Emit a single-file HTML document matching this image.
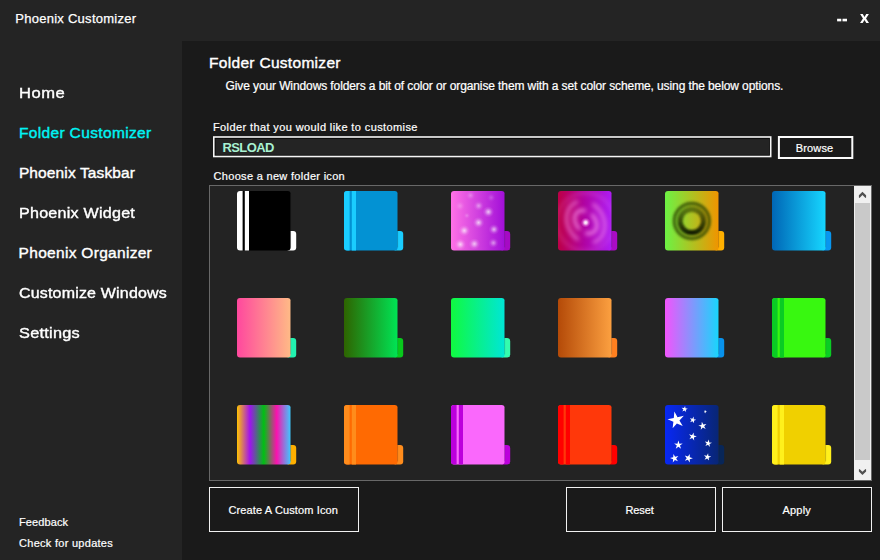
<!DOCTYPE html>
<html><head><meta charset="utf-8"><title>Phoenix Customizer</title>
<style>
html,body{margin:0;padding:0;}
body{width:880px;height:560px;background:#242424;overflow:hidden;position:relative;font-family:"Liberation Sans",sans-serif;color:#fff;}
.abs{position:absolute;white-space:nowrap;line-height:1;}
#content{position:absolute;left:182px;top:41px;width:698px;height:519px;background:#1a1a1a;}
.t{position:absolute;white-space:nowrap;line-height:1;}
.btn{position:absolute;box-sizing:border-box;border:1px solid #f2f2f2;background:#1a1a1a;}
.ic{position:absolute;}
</style></head><body>
<div id="content"></div>
<div class="t" id="title" style="left:15.2px;top:11.6px;font-size:13px;letter-spacing:0.271px;color:#fff;-webkit-text-stroke:0.25px #fff;">Phoenix Customizer</div>
<svg class="abs" style="left:836px;top:17px;" width="13" height="6" viewBox="0 0 13 6"><rect x="1.1" y="1.75" width="4.2" height="2.6" fill="#fff"/><rect x="6.5" y="1.75" width="4.5" height="2.6" fill="#fff"/></svg>
<svg class="abs" id="closex" style="left:858px;top:12px;" width="13" height="13" viewBox="0 0 13 13"><polygon points="2.1,2.1 4.8,2.1 6.5,4.9 8.2,2.1 10.9,2.1 8.05,6.5 11,10.9 8.3,10.9 6.5,8.1 4.7,10.9 2,10.9 4.95,6.5" fill="#fff"/></svg>
<div class="t" id="n0" style="left:18.83px;top:84.6px;font-size:15.5px;letter-spacing:0.507px;color:#fff;-webkit-text-stroke:0.4px #fff;transform:scaleX(1.0683);transform-origin:0 0;">Home</div>
<div class="t" id="n1" style="left:18.9px;top:124.6px;font-size:15.5px;letter-spacing:0.356px;color:#00f4f4;-webkit-text-stroke:0.4px #00f4f4;">Folder Customizer</div>
<div class="t" id="n2" style="left:18.9px;top:164.6px;font-size:15.5px;letter-spacing:0.121px;color:#fff;-webkit-text-stroke:0.4px #fff;">Phoenix Taskbar</div>
<div class="t" id="n3" style="left:18.56px;top:204.6px;font-size:15.5px;letter-spacing:0.225px;color:#fff;-webkit-text-stroke:0.4px #fff;transform:scaleX(1.0387);transform-origin:0 0;">Phoenix Widget</div>
<div class="t" id="n4" style="left:18.6px;top:244.6px;font-size:15.5px;letter-spacing:0.3px;color:#fff;-webkit-text-stroke:0.4px #fff;">Phoenix Organizer</div>
<div class="t" id="n5" style="left:18.57px;top:284.6px;font-size:15.5px;letter-spacing:0.185px;color:#fff;-webkit-text-stroke:0.4px #fff;transform:scaleX(1.031);transform-origin:0 0;">Customize Windows</div>
<div class="t" id="n6" style="left:18.55px;top:324.6px;font-size:15.5px;letter-spacing:0.228px;color:#fff;-webkit-text-stroke:0.4px #fff;transform:scaleX(1.0536);transform-origin:0 0;">Settings</div>
<div class="t" id="fb" style="left:18.9px;top:516.9px;font-size:11px;letter-spacing:0.129px;color:#fff;-webkit-text-stroke:0.2px #fff;">Feedback</div>
<div class="t" id="cu" style="left:19.1px;top:538.0px;font-size:11px;letter-spacing:0.275px;color:#fff;-webkit-text-stroke:0.2px #fff;">Check for updates</div>
<div class="t" id="h1" style="left:209.0px;top:55.0px;font-size:15.5px;letter-spacing:0.306px;color:#fff;-webkit-text-stroke:0.4px #fff;">Folder Customizer</div>
<div class="t" id="desc" style="left:225.5px;top:80.0px;font-size:12px;letter-spacing:-0.104px;color:#fff;-webkit-text-stroke:0.22px #fff;">Give your Windows folders a bit of color or organise them with a set color scheme, using the below options.</div>
<div class="t" id="l1" style="left:213.0px;top:121.75px;font-size:11px;letter-spacing:0.392px;color:#fff;-webkit-text-stroke:0.2px #fff;">Folder that you would like to customise</div>
<svg class="abs" id="input" style="left:212px;top:135px;" width="562" height="25" viewBox="0 0 562 25"><rect x="1" y="1.2" width="558.5" height="21.1" fill="#f6f6f6"/><rect x="2.6" y="2.8" width="555.3" height="17.9" fill="#050505"/><rect x="3.5" y="3.7" width="553.6" height="16.2" fill="#242424"/></svg>
<div class="t" id="rs" style="left:222.4px;top:140.8px;font-size:13px;font-weight:bold;letter-spacing:-0.58px;color:#a9f2d2;">RSLOAD</div>
<svg class="abs" id="browse" style="left:777px;top:135px;" width="78" height="26" viewBox="0 0 78 26"><rect x="0.9" y="1" width="75.4" height="23" fill="#fbfbfb"/><rect x="2.9" y="3" width="71.4" height="19" fill="#1a1a1a"/></svg>
<div class="t" id="bt" style="left:795.7px;top:142.7px;font-size:11px;letter-spacing:0.16px;color:#fff;-webkit-text-stroke:0.2px #fff;">Browse</div>
<div class="t" id="l2" style="left:213.6px;top:171.0px;font-size:11px;letter-spacing:0.304px;color:#fff;-webkit-text-stroke:0.2px #fff;">Choose a new folder icon</div>
<div class="abs" id="list" style="left:209px;top:185px;width:663px;height:296px;box-sizing:border-box;border:1px solid #686868;background:#232323;"></div>
<div class="abs" id="sbar" style="left:854px;top:186px;width:17px;height:294px;background:#f0f0f0;"></div>
<div class="abs" id="thumb" style="left:855px;top:203px;width:15px;height:257px;background:#c9c9c9;"></div>
<svg class="abs" style="left:854px;top:186px;" width="17" height="17" viewBox="0 0 17 17"><polygon points="4.9,9.3 8.45,5.8 12.1,9.3 12.1,11.4 11.5,11.9 8.45,9 5.5,11.9 4.9,11.4" fill="#505050"/></svg>
<svg class="abs" style="left:854px;top:463px;" width="17" height="17" viewBox="0 0 17 17"><polygon points="4.9,6.5 5.5,6 8.45,8.8 11.5,6 12.1,6.5 12.1,8.6 8.45,11.9 4.9,8.6" fill="#505050"/></svg>
<svg class="ic" style="left:237px;top:190.6px" width="60" height="60" viewBox="0 0 60 60"><defs><clipPath id="c0"><path d="M3,0 H50.6 Q53.6,0 53.6,3 V56.4 Q53.6,59.4 50.6,59.4 H3 Q0,59.4 0,56.4 V3 Q0,0 3,0 Z"/></clipPath></defs><path d="M50.6,40 H56.2 Q59.2,40 59.2,43 V56.4 Q59.2,59.4 56.2,59.4 H50.6 Z" fill="#ffffff"/><path d="M3,0 H50.6 Q53.6,0 53.6,3 V56.4 Q53.6,59.4 50.6,59.4 H3 Q0,59.4 0,56.4 V3 Q0,0 3,0 Z" fill="#000000"/><g clip-path="url(#c0)"><rect x="0" y="0" width="5.6" height="60" fill="#ffffff"/><rect x="7.8" y="0" width="4.2" height="60" fill="#ffffff"/></g><path d="M53.6,3 V56.4" stroke="#2a2a2a" stroke-opacity="0.3" stroke-width="0.7" fill="none"/></svg>
<svg class="ic" style="left:344px;top:190.6px" width="60" height="60" viewBox="0 0 60 60"><defs><clipPath id="c1"><path d="M3,0 H50.6 Q53.6,0 53.6,3 V56.4 Q53.6,59.4 50.6,59.4 H3 Q0,59.4 0,56.4 V3 Q0,0 3,0 Z"/></clipPath></defs><path d="M50.6,40 H56.2 Q59.2,40 59.2,43 V56.4 Q59.2,59.4 56.2,59.4 H50.6 Z" fill="#1acdff"/><path d="M3,0 H50.6 Q53.6,0 53.6,3 V56.4 Q53.6,59.4 50.6,59.4 H3 Q0,59.4 0,56.4 V3 Q0,0 3,0 Z" fill="#0392d3"/><g clip-path="url(#c1)"><rect x="0" y="0" width="5.6" height="60" fill="#1acdff"/><rect x="7.8" y="0" width="4.2" height="60" fill="#1acdff"/></g><path d="M53.6,3 V56.4" stroke="#2a2a2a" stroke-opacity="0.3" stroke-width="0.7" fill="none"/></svg>
<svg class="ic" style="left:451px;top:190.6px" width="60" height="60" viewBox="0 0 60 60"><defs><clipPath id="c2"><path d="M3,0 H50.6 Q53.6,0 53.6,3 V56.4 Q53.6,59.4 50.6,59.4 H3 Q0,59.4 0,56.4 V3 Q0,0 3,0 Z"/></clipPath><linearGradient id="g2" x1="0" y1="0" x2="53.6" y2="0" gradientUnits="userSpaceOnUse"><stop offset="0%" stop-color="#ff72e6"/><stop offset="100%" stop-color="#a20fd8"/></linearGradient><radialGradient id="dg"><stop offset="0" stop-color="#fff" stop-opacity="0.95"/><stop offset="0.3" stop-color="#fff" stop-opacity="0.6"/><stop offset="0.65" stop-color="#fff" stop-opacity="0.18"/><stop offset="1" stop-color="#fff" stop-opacity="0"/></radialGradient></defs><path d="M50.6,40 H56.2 Q59.2,40 59.2,43 V56.4 Q59.2,59.4 56.2,59.4 H50.6 Z" fill="#a60ac4"/><path d="M3,0 H50.6 Q53.6,0 53.6,3 V56.4 Q53.6,59.4 50.6,59.4 H3 Q0,59.4 0,56.4 V3 Q0,0 3,0 Z" fill="url(#g2)"/><g clip-path="url(#c2)"><circle cx="19.6" cy="4.4" r="4.80" fill="url(#dg)" opacity="0.31"/><circle cx="40.2" cy="6.6" r="4.50" fill="url(#dg)" opacity="0.22"/><circle cx="9.0" cy="15.0" r="5.10" fill="url(#dg)" opacity="0.26"/><circle cx="27.7" cy="14.8" r="5.10" fill="url(#dg)" opacity="0.48"/><circle cx="37.4" cy="20.9" r="5.70" fill="url(#dg)" opacity="0.75"/><circle cx="15.9" cy="24.6" r="3.30" fill="url(#dg)" opacity="0.26"/><circle cx="27.6" cy="31.6" r="5.70" fill="url(#dg)" opacity="0.75"/><circle cx="13.3" cy="39.6" r="5.70" fill="url(#dg)" opacity="0.75"/><circle cx="43.0" cy="38.4" r="5.40" fill="url(#dg)" opacity="0.70"/><circle cx="9.3" cy="53.4" r="5.70" fill="url(#dg)" opacity="0.75"/><circle cx="23.4" cy="52.9" r="5.70" fill="url(#dg)" opacity="0.70"/><circle cx="42.4" cy="51.9" r="5.10" fill="url(#dg)" opacity="0.53"/></g><path d="M53.6,3 V56.4" stroke="#2a2a2a" stroke-opacity="0.3" stroke-width="0.7" fill="none"/></svg>
<svg class="ic" style="left:558px;top:190.6px" width="60" height="60" viewBox="0 0 60 60"><defs><clipPath id="c3"><path d="M3,0 H50.6 Q53.6,0 53.6,3 V56.4 Q53.6,59.4 50.6,59.4 H3 Q0,59.4 0,56.4 V3 Q0,0 3,0 Z"/></clipPath><linearGradient id="g3" x1="0" y1="0" x2="53.6" y2="0" gradientUnits="userSpaceOnUse"><stop offset="0%" stop-color="#bc0046"/><stop offset="20%" stop-color="#b8006a"/><stop offset="50%" stop-color="#b004a4"/><stop offset="100%" stop-color="#ae1cf4"/></linearGradient><radialGradient id="sw1"><stop offset="0" stop-color="#fff" stop-opacity="1"/><stop offset="0.3" stop-color="#ffe8fc" stop-opacity="0.85"/><stop offset="0.65" stop-color="#ffb0f4" stop-opacity="0.35"/><stop offset="1" stop-color="#ff9cf0" stop-opacity="0"/></radialGradient><filter id="bl1" x="-50%" y="-50%" width="200%" height="200%"><feGaussianBlur stdDeviation="2"/></filter></defs><path d="M50.6,40 H56.2 Q59.2,40 59.2,43 V56.4 Q59.2,59.4 56.2,59.4 H50.6 Z" fill="#aa0cc4"/><path d="M3,0 H50.6 Q53.6,0 53.6,3 V56.4 Q53.6,59.4 50.6,59.4 H3 Q0,59.4 0,56.4 V3 Q0,0 3,0 Z" fill="url(#g3)"/><g clip-path="url(#c3)"><g filter="url(#bl1)" fill="none" stroke="#ff9cf0" stroke-linecap="round"><ellipse cx="27.7" cy="31" rx="9.5" ry="13" transform="rotate(-42 27.7 31)" stroke-width="3.6" stroke-opacity="0.7" stroke-dasharray="26 9"/><ellipse cx="27.7" cy="31" rx="18" ry="22" transform="rotate(-30 27.7 31)" stroke-width="4" stroke-opacity="0.5" stroke-dasharray="44 18" stroke-dashoffset="10"/><circle cx="27.7" cy="31" r="29" stroke-width="3" stroke-opacity="0.2"/></g><circle cx="27.7" cy="31.6" r="5" fill="url(#sw1)"/></g><path d="M53.6,3 V56.4" stroke="#2a2a2a" stroke-opacity="0.3" stroke-width="0.7" fill="none"/></svg>
<svg class="ic" style="left:665px;top:190.6px" width="60" height="60" viewBox="0 0 60 60"><defs><clipPath id="c4"><path d="M3,0 H50.6 Q53.6,0 53.6,3 V56.4 Q53.6,59.4 50.6,59.4 H3 Q0,59.4 0,56.4 V3 Q0,0 3,0 Z"/></clipPath><linearGradient id="g4" x1="0" y1="0" x2="53.6" y2="0" gradientUnits="userSpaceOnUse"><stop offset="0%" stop-color="#6cf244"/><stop offset="100%" stop-color="#f09400"/></linearGradient><filter id="bl2" x="-50%" y="-50%" width="200%" height="200%"><feGaussianBlur stdDeviation="1.3"/></filter><linearGradient id="rg" x1="0" y1="0" x2="0" y2="1"><stop offset="0" stop-color="#2a3a00" stop-opacity="0.45"/><stop offset="1" stop-color="#101800" stop-opacity="0.95"/></linearGradient></defs><path d="M50.6,40 H56.2 Q59.2,40 59.2,43 V56.4 Q59.2,59.4 56.2,59.4 H50.6 Z" fill="#ffb000"/><path d="M3,0 H50.6 Q53.6,0 53.6,3 V56.4 Q53.6,59.4 50.6,59.4 H3 Q0,59.4 0,56.4 V3 Q0,0 3,0 Z" fill="url(#g4)"/><g clip-path="url(#c4)" filter="url(#bl2)" fill="none"><circle cx="26.8" cy="30" r="14.3" stroke="#2c4400" stroke-opacity="0.28" stroke-width="9"/><circle cx="26.8" cy="30" r="11.6" stroke="url(#rg)" stroke-width="5"/><circle cx="26.8" cy="30" r="17.7" stroke="#2c4400" stroke-opacity="0.6" stroke-width="3.4"/></g><path d="M53.6,3 V56.4" stroke="#2a2a2a" stroke-opacity="0.3" stroke-width="0.7" fill="none"/></svg>
<svg class="ic" style="left:772px;top:190.6px" width="60" height="60" viewBox="0 0 60 60"><defs><clipPath id="c5"><path d="M3,0 H50.6 Q53.6,0 53.6,3 V56.4 Q53.6,59.4 50.6,59.4 H3 Q0,59.4 0,56.4 V3 Q0,0 3,0 Z"/></clipPath><linearGradient id="g5" x1="0" y1="0" x2="53.6" y2="0" gradientUnits="userSpaceOnUse"><stop offset="0%" stop-color="#0066b6"/><stop offset="100%" stop-color="#16d6ff"/></linearGradient></defs><path d="M50.6,40 H56.2 Q59.2,40 59.2,43 V56.4 Q59.2,59.4 56.2,59.4 H50.6 Z" fill="#0896f0"/><path d="M3,0 H50.6 Q53.6,0 53.6,3 V56.4 Q53.6,59.4 50.6,59.4 H3 Q0,59.4 0,56.4 V3 Q0,0 3,0 Z" fill="url(#g5)"/><path d="M53.6,3 V56.4" stroke="#2a2a2a" stroke-opacity="0.3" stroke-width="0.7" fill="none"/></svg>
<svg class="ic" style="left:237px;top:297.6px" width="60" height="60" viewBox="0 0 60 60"><defs><clipPath id="c6"><path d="M3,0 H50.6 Q53.6,0 53.6,3 V56.4 Q53.6,59.4 50.6,59.4 H3 Q0,59.4 0,56.4 V3 Q0,0 3,0 Z"/></clipPath><linearGradient id="g6" x1="0" y1="0" x2="53.6" y2="0" gradientUnits="userSpaceOnUse"><stop offset="0%" stop-color="#ff489e"/><stop offset="100%" stop-color="#ffba86"/></linearGradient></defs><path d="M50.6,40 H56.2 Q59.2,40 59.2,43 V56.4 Q59.2,59.4 56.2,59.4 H50.6 Z" fill="#22f2b0"/><path d="M3,0 H50.6 Q53.6,0 53.6,3 V56.4 Q53.6,59.4 50.6,59.4 H3 Q0,59.4 0,56.4 V3 Q0,0 3,0 Z" fill="url(#g6)"/><path d="M53.6,3 V56.4" stroke="#2a2a2a" stroke-opacity="0.3" stroke-width="0.7" fill="none"/></svg>
<svg class="ic" style="left:344px;top:297.6px" width="60" height="60" viewBox="0 0 60 60"><defs><clipPath id="c7"><path d="M3,0 H50.6 Q53.6,0 53.6,3 V56.4 Q53.6,59.4 50.6,59.4 H3 Q0,59.4 0,56.4 V3 Q0,0 3,0 Z"/></clipPath><linearGradient id="g7" x1="0" y1="0" x2="53.6" y2="0" gradientUnits="userSpaceOnUse"><stop offset="0%" stop-color="#2e6400"/><stop offset="100%" stop-color="#00e454"/></linearGradient></defs><path d="M50.6,40 H56.2 Q59.2,40 59.2,43 V56.4 Q59.2,59.4 56.2,59.4 H50.6 Z" fill="#08c81c"/><path d="M3,0 H50.6 Q53.6,0 53.6,3 V56.4 Q53.6,59.4 50.6,59.4 H3 Q0,59.4 0,56.4 V3 Q0,0 3,0 Z" fill="url(#g7)"/><path d="M53.6,3 V56.4" stroke="#2a2a2a" stroke-opacity="0.3" stroke-width="0.7" fill="none"/></svg>
<svg class="ic" style="left:451px;top:297.6px" width="60" height="60" viewBox="0 0 60 60"><defs><clipPath id="c8"><path d="M3,0 H50.6 Q53.6,0 53.6,3 V56.4 Q53.6,59.4 50.6,59.4 H3 Q0,59.4 0,56.4 V3 Q0,0 3,0 Z"/></clipPath><linearGradient id="g8" x1="0" y1="0" x2="53.6" y2="0" gradientUnits="userSpaceOnUse"><stop offset="0%" stop-color="#10fa40"/><stop offset="100%" stop-color="#00e6d6"/></linearGradient></defs><path d="M50.6,40 H56.2 Q59.2,40 59.2,43 V56.4 Q59.2,59.4 56.2,59.4 H50.6 Z" fill="#34fcae"/><path d="M3,0 H50.6 Q53.6,0 53.6,3 V56.4 Q53.6,59.4 50.6,59.4 H3 Q0,59.4 0,56.4 V3 Q0,0 3,0 Z" fill="url(#g8)"/><path d="M53.6,3 V56.4" stroke="#2a2a2a" stroke-opacity="0.3" stroke-width="0.7" fill="none"/></svg>
<svg class="ic" style="left:558px;top:297.6px" width="60" height="60" viewBox="0 0 60 60"><defs><clipPath id="c9"><path d="M3,0 H50.6 Q53.6,0 53.6,3 V56.4 Q53.6,59.4 50.6,59.4 H3 Q0,59.4 0,56.4 V3 Q0,0 3,0 Z"/></clipPath><linearGradient id="g9" x1="0" y1="0" x2="53.6" y2="0" gradientUnits="userSpaceOnUse"><stop offset="0%" stop-color="#b44a08"/><stop offset="100%" stop-color="#fca040"/></linearGradient></defs><path d="M50.6,40 H56.2 Q59.2,40 59.2,43 V56.4 Q59.2,59.4 56.2,59.4 H50.6 Z" fill="#ff8020"/><path d="M3,0 H50.6 Q53.6,0 53.6,3 V56.4 Q53.6,59.4 50.6,59.4 H3 Q0,59.4 0,56.4 V3 Q0,0 3,0 Z" fill="url(#g9)"/><path d="M53.6,3 V56.4" stroke="#2a2a2a" stroke-opacity="0.3" stroke-width="0.7" fill="none"/></svg>
<svg class="ic" style="left:665px;top:297.6px" width="60" height="60" viewBox="0 0 60 60"><defs><clipPath id="c10"><path d="M3,0 H50.6 Q53.6,0 53.6,3 V56.4 Q53.6,59.4 50.6,59.4 H3 Q0,59.4 0,56.4 V3 Q0,0 3,0 Z"/></clipPath><linearGradient id="g10" x1="0" y1="0" x2="53.6" y2="0" gradientUnits="userSpaceOnUse"><stop offset="0%" stop-color="#f254fc"/><stop offset="100%" stop-color="#18d6fc"/></linearGradient></defs><path d="M50.6,40 H56.2 Q59.2,40 59.2,43 V56.4 Q59.2,59.4 56.2,59.4 H50.6 Z" fill="#0892ec"/><path d="M3,0 H50.6 Q53.6,0 53.6,3 V56.4 Q53.6,59.4 50.6,59.4 H3 Q0,59.4 0,56.4 V3 Q0,0 3,0 Z" fill="url(#g10)"/><path d="M53.6,3 V56.4" stroke="#2a2a2a" stroke-opacity="0.3" stroke-width="0.7" fill="none"/></svg>
<svg class="ic" style="left:772px;top:297.6px" width="60" height="60" viewBox="0 0 60 60"><defs><clipPath id="c11"><path d="M3,0 H50.6 Q53.6,0 53.6,3 V56.4 Q53.6,59.4 50.6,59.4 H3 Q0,59.4 0,56.4 V3 Q0,0 3,0 Z"/></clipPath></defs><path d="M50.6,40 H56.2 Q59.2,40 59.2,43 V56.4 Q59.2,59.4 56.2,59.4 H50.6 Z" fill="#0acc24"/><path d="M3,0 H50.6 Q53.6,0 53.6,3 V56.4 Q53.6,59.4 50.6,59.4 H3 Q0,59.4 0,56.4 V3 Q0,0 3,0 Z" fill="#38f810"/><g clip-path="url(#c11)"><rect x="0" y="0" width="5.6" height="60" fill="#0acc24"/><rect x="7.8" y="0" width="4.2" height="60" fill="#0acc24"/></g><path d="M53.6,3 V56.4" stroke="#2a2a2a" stroke-opacity="0.3" stroke-width="0.7" fill="none"/></svg>
<svg class="ic" style="left:237px;top:404.6px" width="60" height="60" viewBox="0 0 60 60"><defs><clipPath id="c12"><path d="M3,0 H50.6 Q53.6,0 53.6,3 V56.4 Q53.6,59.4 50.6,59.4 H3 Q0,59.4 0,56.4 V3 Q0,0 3,0 Z"/></clipPath><linearGradient id="g12" x1="0" y1="0" x2="53.6" y2="0" gradientUnits="userSpaceOnUse"><stop offset="0%" stop-color="#ffc400"/><stop offset="24%" stop-color="#a012f0"/><stop offset="50%" stop-color="#00c012"/><stop offset="74%" stop-color="#fa12ae"/><stop offset="100%" stop-color="#3ccaff"/></linearGradient></defs><path d="M50.6,40 H56.2 Q59.2,40 59.2,43 V56.4 Q59.2,59.4 56.2,59.4 H50.6 Z" fill="#ffb000"/><path d="M3,0 H50.6 Q53.6,0 53.6,3 V56.4 Q53.6,59.4 50.6,59.4 H3 Q0,59.4 0,56.4 V3 Q0,0 3,0 Z" fill="url(#g12)"/><path d="M53.6,3 V56.4" stroke="#2a2a2a" stroke-opacity="0.3" stroke-width="0.7" fill="none"/></svg>
<svg class="ic" style="left:344px;top:404.6px" width="60" height="60" viewBox="0 0 60 60"><defs><clipPath id="c13"><path d="M3,0 H50.6 Q53.6,0 53.6,3 V56.4 Q53.6,59.4 50.6,59.4 H3 Q0,59.4 0,56.4 V3 Q0,0 3,0 Z"/></clipPath></defs><path d="M50.6,40 H56.2 Q59.2,40 59.2,43 V56.4 Q59.2,59.4 56.2,59.4 H50.6 Z" fill="#ff8c1c"/><path d="M3,0 H50.6 Q53.6,0 53.6,3 V56.4 Q53.6,59.4 50.6,59.4 H3 Q0,59.4 0,56.4 V3 Q0,0 3,0 Z" fill="#ff6a02"/><g clip-path="url(#c13)"><rect x="0" y="0" width="5.6" height="60" fill="#ff8c1c"/><rect x="7.8" y="0" width="4.2" height="60" fill="#ff8c1c"/></g><path d="M53.6,3 V56.4" stroke="#2a2a2a" stroke-opacity="0.3" stroke-width="0.7" fill="none"/></svg>
<svg class="ic" style="left:451px;top:404.6px" width="60" height="60" viewBox="0 0 60 60"><defs><clipPath id="c14"><path d="M3,0 H50.6 Q53.6,0 53.6,3 V56.4 Q53.6,59.4 50.6,59.4 H3 Q0,59.4 0,56.4 V3 Q0,0 3,0 Z"/></clipPath></defs><path d="M50.6,40 H56.2 Q59.2,40 59.2,43 V56.4 Q59.2,59.4 56.2,59.4 H50.6 Z" fill="#bc00dc"/><path d="M3,0 H50.6 Q53.6,0 53.6,3 V56.4 Q53.6,59.4 50.6,59.4 H3 Q0,59.4 0,56.4 V3 Q0,0 3,0 Z" fill="#fa68fc"/><g clip-path="url(#c14)"><rect x="0" y="0" width="5.6" height="60" fill="#bc00dc"/><rect x="7.8" y="0" width="4.2" height="60" fill="#bc00dc"/></g><path d="M53.6,3 V56.4" stroke="#2a2a2a" stroke-opacity="0.3" stroke-width="0.7" fill="none"/></svg>
<svg class="ic" style="left:558px;top:404.6px" width="60" height="60" viewBox="0 0 60 60"><defs><clipPath id="c15"><path d="M3,0 H50.6 Q53.6,0 53.6,3 V56.4 Q53.6,59.4 50.6,59.4 H3 Q0,59.4 0,56.4 V3 Q0,0 3,0 Z"/></clipPath></defs><path d="M50.6,40 H56.2 Q59.2,40 59.2,43 V56.4 Q59.2,59.4 56.2,59.4 H50.6 Z" fill="#ff0000"/><path d="M3,0 H50.6 Q53.6,0 53.6,3 V56.4 Q53.6,59.4 50.6,59.4 H3 Q0,59.4 0,56.4 V3 Q0,0 3,0 Z" fill="#ff380a"/><g clip-path="url(#c15)"><rect x="0" y="0" width="5.6" height="60" fill="#ff0000"/><rect x="7.8" y="0" width="4.2" height="60" fill="#ff0000"/></g><path d="M53.6,3 V56.4" stroke="#2a2a2a" stroke-opacity="0.3" stroke-width="0.7" fill="none"/></svg>
<svg class="ic" style="left:665px;top:404.6px" width="60" height="60" viewBox="0 0 60 60"><defs><clipPath id="c16"><path d="M3,0 H50.6 Q53.6,0 53.6,3 V56.4 Q53.6,59.4 50.6,59.4 H3 Q0,59.4 0,56.4 V3 Q0,0 3,0 Z"/></clipPath><linearGradient id="g16" x1="0" y1="0" x2="53.6" y2="0" gradientUnits="userSpaceOnUse"><stop offset="0%" stop-color="#0828f4"/><stop offset="100%" stop-color="#082674"/></linearGradient></defs><path d="M50.6,40 H56.2 Q59.2,40 59.2,43 V56.4 Q59.2,59.4 56.2,59.4 H50.6 Z" fill="#082658"/><path d="M3,0 H50.6 Q53.6,0 53.6,3 V56.4 Q53.6,59.4 50.6,59.4 H3 Q0,59.4 0,56.4 V3 Q0,0 3,0 Z" fill="url(#g16)"/><g clip-path="url(#c16)" fill="#fff"><polygon points="9.37,6.59 12.52,12.23 18.82,10.80 14.44,15.54 17.74,21.09 11.88,18.38 7.62,23.24 8.38,16.83 2.45,14.28 8.78,13.02"/><polygon points="20.06,0.93 20.45,3.32 22.85,3.63 20.70,4.74 21.15,7.11 19.43,5.41 17.31,6.57 18.40,4.41 16.63,2.75 19.03,3.12"/><polygon points="40.92,5.01 40.85,6.33 42.10,6.76 40.82,7.11 40.80,8.43 40.07,7.33 38.81,7.71 39.63,6.68 38.88,5.59 40.12,6.06"/><polygon points="28.65,11.60 28.79,14.17 31.29,14.76 28.90,15.69 29.11,18.25 27.49,16.26 25.12,17.25 26.51,15.09 24.83,13.15 27.31,13.80"/><polygon points="36.85,16.77 38.30,19.57 41.40,18.98 39.18,21.22 40.69,23.99 37.88,22.57 35.72,24.86 36.20,21.75 33.34,20.40 36.46,19.89"/><polygon points="28.62,27.52 28.79,30.60 31.79,31.31 28.92,32.42 29.17,35.49 27.22,33.11 24.38,34.30 26.05,31.71 24.04,29.37 27.02,30.16"/><polygon points="13.40,35.50 14.38,38.65 17.68,38.61 14.98,40.51 16.05,43.64 13.40,41.66 10.75,43.64 11.82,40.51 9.12,38.61 12.42,38.65"/><polygon points="43.88,34.56 44.24,37.40 47.06,37.86 44.47,39.08 44.91,41.91 42.95,39.82 40.39,41.11 41.77,38.60 39.76,36.57 42.57,37.10"/><polygon points="8.41,49.03 10.12,51.86 13.32,51.02 11.16,53.52 12.95,56.29 9.90,55.02 7.81,57.57 8.09,54.28 5.01,53.09 8.22,52.33"/><polygon points="24.79,48.92 24.75,52.22 27.90,53.20 24.75,54.18 24.79,57.48 22.89,54.78 19.76,55.85 21.73,53.20 19.76,50.55 22.89,51.62"/><polygon points="43.08,48.26 43.44,51.10 46.26,51.56 43.67,52.78 44.11,55.61 42.15,53.52 39.59,54.81 40.97,52.30 38.96,50.27 41.77,50.80"/></g><path d="M53.6,3 V56.4" stroke="#2a2a2a" stroke-opacity="0.3" stroke-width="0.7" fill="none"/></svg>
<svg class="ic" style="left:772px;top:404.6px" width="60" height="60" viewBox="0 0 60 60"><defs><clipPath id="c17"><path d="M3,0 H50.6 Q53.6,0 53.6,3 V56.4 Q53.6,59.4 50.6,59.4 H3 Q0,59.4 0,56.4 V3 Q0,0 3,0 Z"/></clipPath></defs><path d="M50.6,40 H56.2 Q59.2,40 59.2,43 V56.4 Q59.2,59.4 56.2,59.4 H50.6 Z" fill="#fff01c"/><path d="M3,0 H50.6 Q53.6,0 53.6,3 V56.4 Q53.6,59.4 50.6,59.4 H3 Q0,59.4 0,56.4 V3 Q0,0 3,0 Z" fill="#f0d000"/><g clip-path="url(#c17)"><rect x="0" y="0" width="5.6" height="60" fill="#fff01c"/><rect x="7.8" y="0" width="4.2" height="60" fill="#fff01c"/></g><path d="M53.6,3 V56.4" stroke="#2a2a2a" stroke-opacity="0.3" stroke-width="0.7" fill="none"/></svg>
<div class="btn" style="left:209px;top:487px;width:150px;height:45px;"></div>
<div class="t" id="b1" style="left:228.4px;top:505.0px;font-size:11px;letter-spacing:0.137px;color:#fff;-webkit-text-stroke:0.2px #fff;">Create A Custom Icon</div>
<div class="btn" style="left:566px;top:487px;width:150px;height:45px;"></div>
<div class="t" id="b2" style="left:625.4px;top:505.0px;font-size:11px;letter-spacing:-0.1px;color:#fff;-webkit-text-stroke:0.2px #fff;">Reset</div>
<div class="btn" style="left:722px;top:487px;width:150px;height:45px;"></div>
<div class="t" id="b3" style="left:782.5px;top:505.0px;font-size:11px;letter-spacing:0.2px;color:#fff;-webkit-text-stroke:0.2px #fff;">Apply</div>
</body></html>
